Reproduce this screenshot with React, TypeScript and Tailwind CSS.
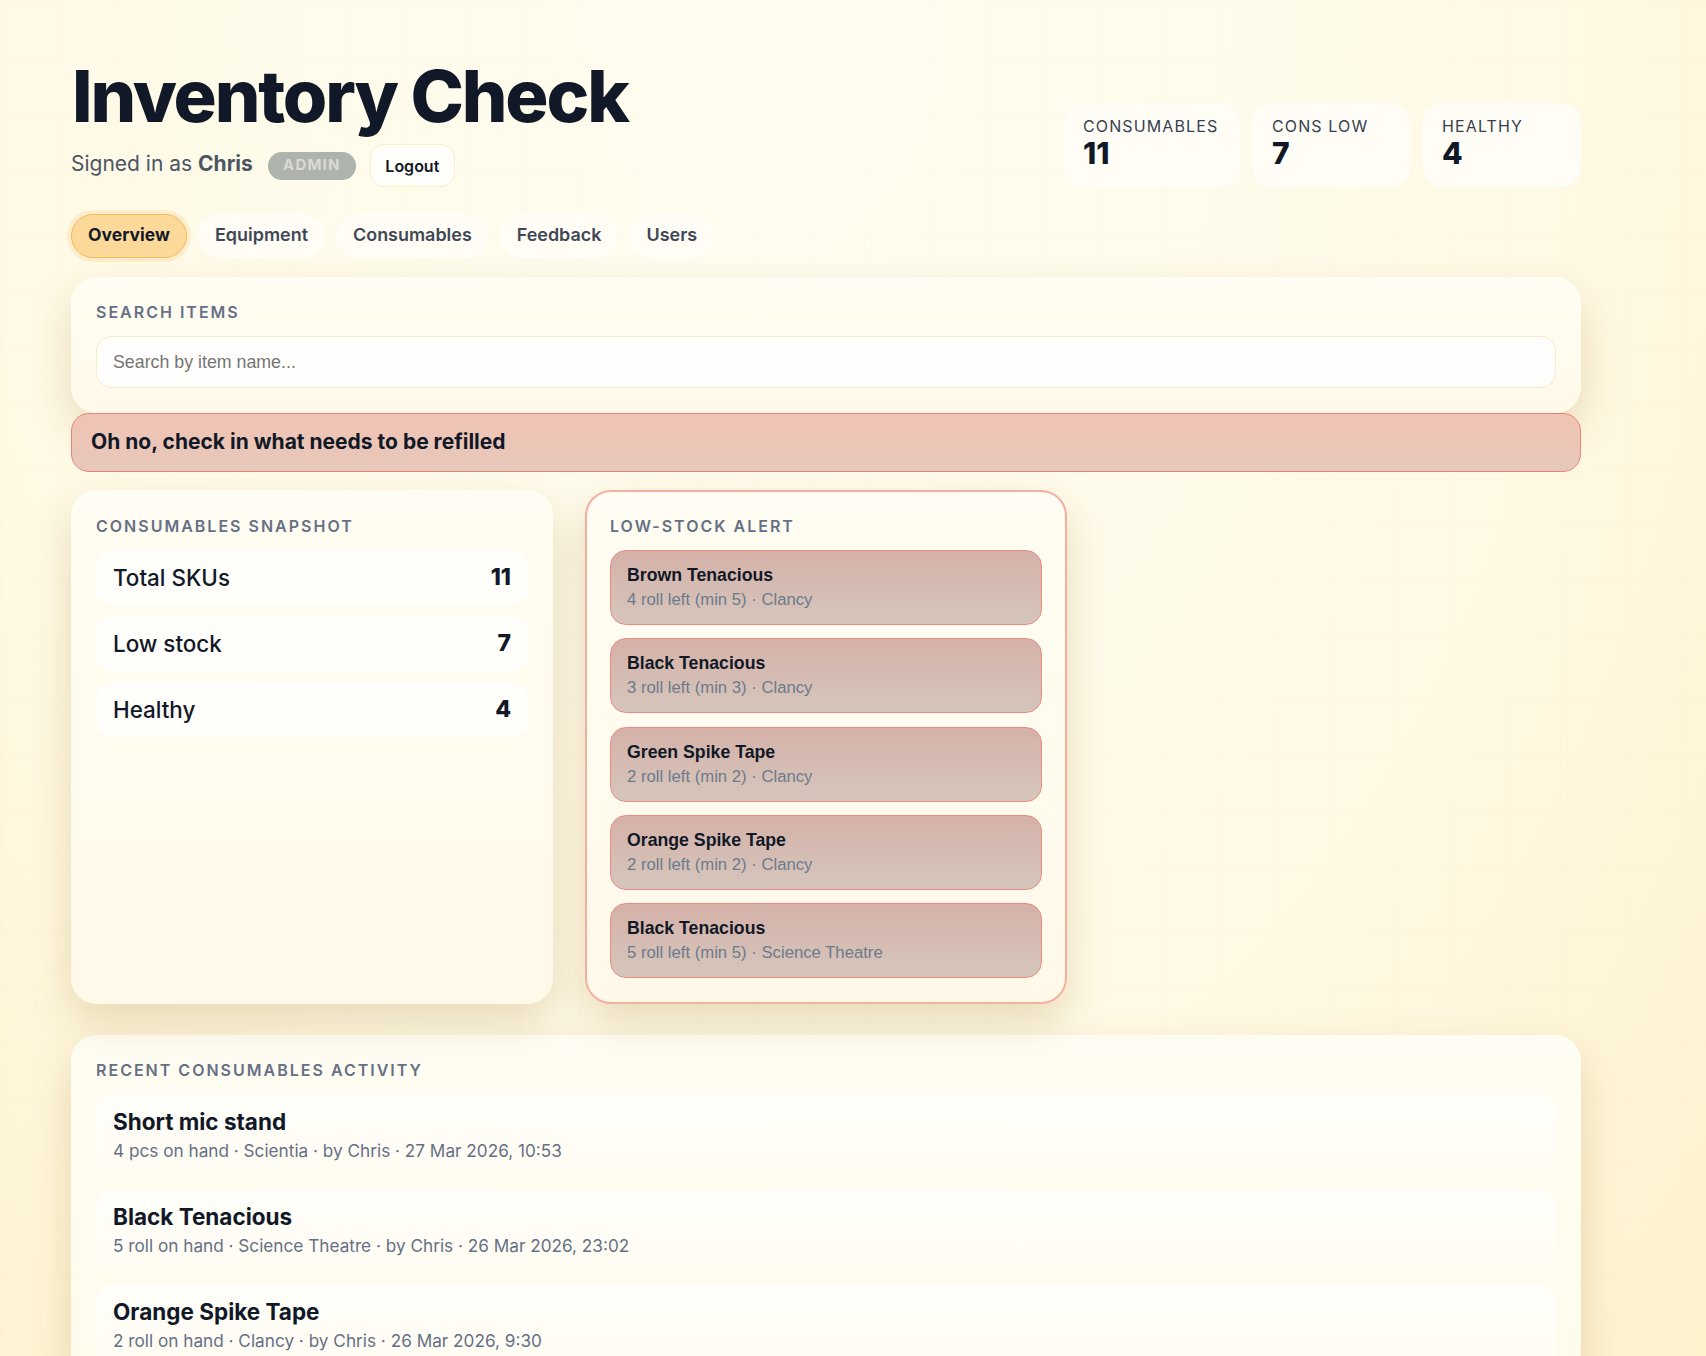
const tabs = ["Overview", "Equipment", "Consumables", "Feedback", "Users"];

const stats = [
  { label: "CONSUMABLES", value: "11", width: "w-[176px]" },
  { label: "CONS LOW", value: "7", width: "w-[157px]" },
  { label: "HEALTHY", value: "4", width: "w-[158px]" },
];

const snapshot = [
  { label: "Total SKUs", value: "11" },
  { label: "Low stock", value: "7" },
  { label: "Healthy", value: "4" },
];

const lowStock = [
  { name: "Brown Tenacious", detail: "4 roll left (min 5) · Clancy" },
  { name: "Black Tenacious", detail: "3 roll left (min 3) · Clancy" },
  { name: "Green Spike Tape", detail: "2 roll left (min 2) · Clancy" },
  { name: "Orange Spike Tape", detail: "2 roll left (min 2) · Clancy" },
  { name: "Black Tenacious", detail: "5 roll left (min 5) · Science Theatre" },
];

const activity = [
  { name: "Short mic stand", detail: "4 pcs on hand · Scientia · by Chris · 27 Mar 2026, 10:53" },
  { name: "Black Tenacious", detail: "5 roll on hand · Science Theatre · by Chris · 26 Mar 2026, 23:02" },
  { name: "Orange Spike Tape", detail: "2 roll on hand · Clancy · by Chris · 26 Mar 2026, 9:30" },
];

const card =
  "rounded-[26px] bg-[linear-gradient(180deg,#fffdf3,#fff9e9)] shadow-[0_18px_42px_rgba(140,95,10,0.2)]";
const cardLabel = "text-[16px] leading-[20px] font-semibold tracking-[0.125em] text-[#667085]";

export default function App() {
  return (
    <div className="relative h-screen overflow-hidden bg-[linear-gradient(rgba(205,175,95,0.03)_1px,transparent_1px),linear-gradient(90deg,rgba(205,175,95,0.03)_1px,transparent_1px),radial-gradient(ellipse_at_45%_0%,#fffdf1_0%,#fffae6_58%,#fef2cd_100%)] bg-[length:58px_58px,58px_58px,100%_100%] font-['Inter',sans-serif] text-[#111827]">
      <div className="w-[1510px] ml-[71px] pt-[52px]">
        <header className="flex items-end justify-between">
          <div>
            <h1 className="ml-[1px] text-[72px] leading-[88px] font-extrabold tracking-[-0.03em]">Inventory Check</h1>
            <div className="mt-[4px] flex items-center">
              <span className="text-[21px] leading-[26px] -mt-[3px] text-[#4b5563]">
                Signed in as <strong className="font-bold">Chris</strong>
              </span>
              <span className="ml-[15px] h-[28px] w-[88px] flex items-center justify-center rounded-full bg-[#aeb3ae] text-[15px] font-bold tracking-[0.08em] text-[#d9dad3]">
                ADMIN
              </span>
              <button className="ml-[14px] h-[43px] w-[85px] rounded-[14px] border border-[#fbeecb] bg-[#fffefa] text-[16px] font-semibold text-[#111827]">
                Logout
              </button>
            </div>
          </div>
          <div className="flex gap-[13px]">
            {stats.map((s) => (
              <div key={s.label} className={`${s.width} h-[84px] rounded-[20px] bg-[#fffdf6] pl-[19px] pt-[13px]`}>
                <div className="text-[16px] leading-[20px] font-normal tracking-[0.07em] text-[#374151]">{s.label}</div>
                <div className="mt-[2px] text-[30px] leading-[30px] font-extrabold">{s.value}</div>
              </div>
            ))}
          </div>
        </header>

        <nav className="mt-[27px] flex gap-[11px]">
          {tabs.map((t, i) => (
            <button
              key={t}
              className={
                i === 0
                  ? "h-[44px] w-[116px] rounded-full border border-[#f6b95c] bg-[#fdd999] pb-[2px] text-[17.5px] font-bold text-[#111827] shadow-[0_0_0_4px_rgba(246,200,120,0.25)]"
                  : "h-[44px] px-[17px] rounded-full bg-[#fffdf5] pb-[2px] text-[17.95px] font-semibold text-[#3f4856]"
              }
            >
              {t}
            </button>
          ))}
        </nav>

        <section className={`${card} mt-[19px] h-[136px] px-[25px] pt-[25px]`}>
          <div className={cardLabel}>SEARCH ITEMS</div>
          <input
            placeholder="Search by item name..."
            className="mt-[14px] h-[52px] w-full rounded-[15px] border border-[#f7ebca] bg-[#fffefc] px-[16px] font-['Liberation_Sans',sans-serif] text-[17.8px] placeholder:text-[#757575] outline-none"
          />
        </section>

        <div className="h-[59px] flex items-center rounded-[18px] border border-[#e78479] bg-[linear-gradient(180deg,#f1c3b3,#e6c8ba)] px-[19px] pb-[1px] text-[21px] font-bold">
          Oh no, check in what needs to be refilled
        </div>

        <div className="mt-[18px] grid grid-cols-3 gap-[32px]">
          <section className={`${card} h-[514px] px-[25px] pt-[26px]`}>
            <div className={cardLabel}>CONSUMABLES SNAPSHOT</div>
            <div className="mt-[14px] flex flex-col gap-[11px]">
              {snapshot.map((r) => (
                <div key={r.label} className="h-[55px] flex items-center justify-between rounded-[16px] bg-[#fffefa] px-[17px]">
                  <span className="text-[22.4px] font-medium">{r.label}</span>
                  <span className="text-[23px] font-extrabold">{r.value}</span>
                </div>
              ))}
            </div>
          </section>

          <section className={`${card} h-[514px] border-2 border-[#f6ae9f] px-[23px] pt-[24px]`}>
            <div className={cardLabel}>LOW-STOCK ALERT</div>
            <div className="mt-[14px] flex flex-col gap-[13.3px]">
              {lowStock.map((r, i) => (
                <div
                  key={i}
                  className="h-[75px] rounded-[16px] border border-[#ee8a80] bg-[linear-gradient(180deg,#d5b1a8,#d5c6bc)] px-[16px] pt-[13px] font-['Liberation_Sans',sans-serif]"
                >
                  <div className="text-[17.7px] leading-[22px] font-bold">{r.name}</div>
                  <div className="mt-[3px] text-[16.7px] leading-[22px] text-[#6b7a8c]">{r.detail}</div>
                </div>
              ))}
            </div>
          </section>
        </div>

        <section className={`${card} mt-[31px] h-[500px] px-[25px] pt-[25px]`}>
          <div className={cardLabel}>RECENT CONSUMABLES ACTIVITY</div>
          <div className="mt-[15px] flex flex-col gap-[13px]">
            {activity.map((r) => (
              <div key={r.name} className="h-[82px] rounded-[16px] bg-[linear-gradient(180deg,#fffefa,#fffcf2)] px-[17px] pt-[12px]">
                <div className="text-[22.5px] leading-[30px] font-bold">{r.name}</div>
                <div className="mt-[1px] text-[17.2px] leading-[26px] text-[#667085]">{r.detail}</div>
              </div>
            ))}
          </div>
        </section>
      </div>
    </div>
  );
}
